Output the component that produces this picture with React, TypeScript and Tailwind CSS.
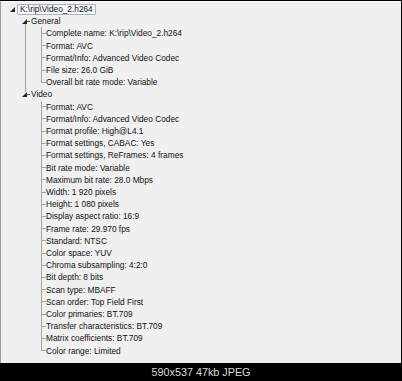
import React from "react";

const general = [
  "Complete name: K:\\rip\\Video_2.h264",
  "Format: AVC",
  "Format/Info: Advanced Video Codec",
  "File size: 26.0 GiB",
  "Overall bit rate mode: Variable",
];

const video = [
  "Format: AVC",
  "Format/Info: Advanced Video Codec",
  "Format profile: High@L4.1",
  "Format settings, CABAC: Yes",
  "Format settings, ReFrames: 4 frames",
  "Bit rate mode: Variable",
  "Maximum bit rate: 28.0 Mbps",
  "Width: 1 920 pixels",
  "Height: 1 080 pixels",
  "Display aspect ratio: 16:9",
  "Frame rate: 29.970 fps",
  "Standard: NTSC",
  "Color space: YUV",
  "Chroma subsampling: 4:2:0",
  "Bit depth: 8 bits",
  "Scan type: MBAFF",
  "Scan order: Top Field First",
  "Color primaries: BT.709",
  "Transfer characteristics: BT.709",
  "Matrix coefficients: BT.709",
  "Color range: Limited",
];

function Tri() {
  return (
    <svg width="5" height="5" viewBox="0 0 5 5" className="shrink-0 block">
      <polygon points="5,0 5,5 0,5" fill="#262626" />
    </svg>
  );
}

function LeafRow({
  text,
  outerLine,
  last,
}: {
  text: string;
  outerLine: boolean;
  last: boolean;
}) {
  return (
    <div className="flex h-[12.21px]">
      <div className="w-[24px] shrink-0" />
      <div
        className={
          outerLine
            ? "w-[16px] shrink-0 border-l border-[#a4a4a4]"
            : "w-[16px] shrink-0"
        }
      />
      <div className="w-[5px] shrink-0 flex flex-col">
        <div className="flex-1 border-l border-b border-[#a4a4a4]" />
        <div className={last ? "flex-1" : "flex-1 border-l border-[#a4a4a4]"} />
      </div>
      <span className="self-center whitespace-pre leading-none">{text}</span>
    </div>
  );
}

function GroupRow({ text, first }: { text: string; first: boolean }) {
  return (
    <div className="flex h-[12.21px] items-stretch">
      <div className="w-[21px] shrink-0" />
      <div className="w-[5px] shrink-0 flex flex-col">
        <div className={first ? "flex-1" : "flex-1 ml-[3px] border-l border-[#a4a4a4]"} />
        <Tri />
        <div className={first ? "flex-1 ml-[3px] border-l border-[#a4a4a4]" : "flex-1"} />
      </div>
      <div className="w-[3px] h-px bg-[#6a6a6a] self-center shrink-0" />
      <span className="ml-px self-center leading-none">{text}</span>
    </div>
  );
}

export default function App() {
  return (
    <div className="w-[402px] h-[381px] bg-black flex flex-col pt-px font-['Liberation_Sans',Arial,sans-serif]">
      <div className="w-[401px] h-[362px] bg-[#f0f0f0] border-l border-[#9c9c9c] border-t border-t-[#fafafa] text-[8.3px] text-[#111111] flex flex-col">
        <div className="pt-px">
          <div className="flex h-[12.21px] items-center">
            <div className="w-[9px] shrink-0" />
            <Tri />
            <span className="ml-[2px] h-[11px] px-[2px] flex items-center border border-[#9fb3cc] bg-[#f6f8fb] rounded-[1px] leading-none">
              K:\rip\Video_2.h264
            </span>
          </div>
          <GroupRow text="General" first={true} />
          {general.map((t, i) => (
            <LeafRow key={"g" + i} text={t} outerLine={true} last={i === general.length - 1} />
          ))}
          <GroupRow text="Video" first={false} />
          {video.map((t, i) => (
            <LeafRow key={"v" + i} text={t} outerLine={false} last={i === video.length - 1} />
          ))}
        </div>
      </div>
      <div className="flex-1 flex items-center justify-center text-[10.8px] text-[#dcdcdc] leading-none">
        590x537 47kb JPEG
      </div>
    </div>
  );
}
